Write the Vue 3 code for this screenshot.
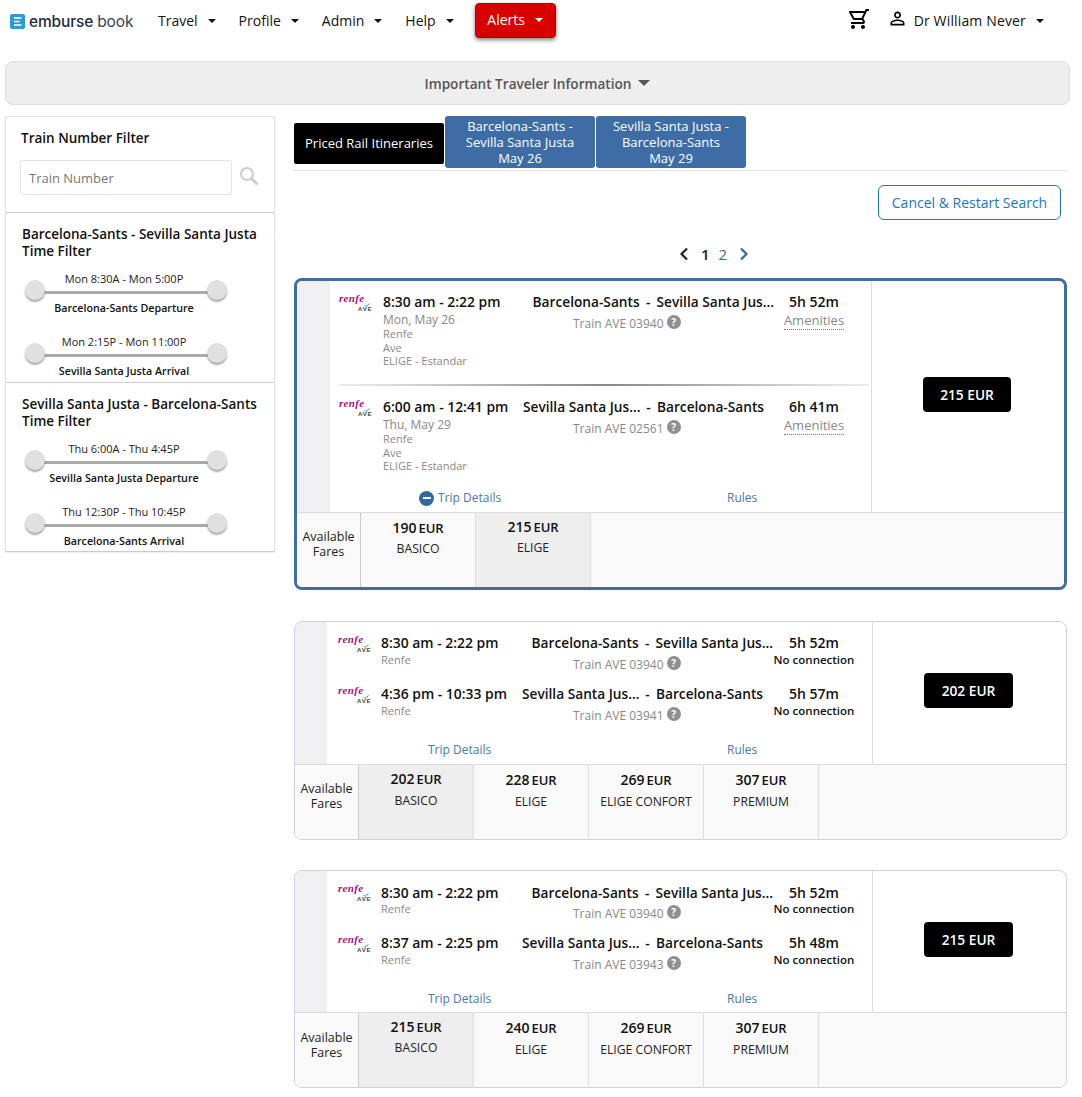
<script setup>
const nav = ['Travel', 'Profile', 'Admin', 'Help']
const filters = [
  { title: ['Barcelona-Sants - Sevilla Santa Justa', 'Time Filter'], sliders: [
    { range: 'Mon 8:30A - Mon 5:00P', cap: 'Barcelona-Sants Departure' },
    { range: 'Mon 2:15P - Mon 11:00P', cap: 'Sevilla Santa Justa Arrival' } ] },
  { title: ['Sevilla Santa Justa - Barcelona-Sants', 'Time Filter'], sliders: [
    { range: 'Thu 6:00A - Thu 4:45P', cap: 'Sevilla Santa Justa Departure' },
    { range: 'Thu 12:30P - Thu 10:45P', cap: 'Barcelona-Sants Arrival' } ] },
]
const out = { o: 'Barcelona-Sants', d: 'Sevilla Santa Jus...' }
const back = { o: 'Sevilla Santa Jus...', d: 'Barcelona-Sants' }
const cards = [
  { active: true, price: '215 EUR', legs: [
    { ...out, time: '8:30 am - 2:22 pm', date: 'Mon, May 26', train: 'Train AVE 03940', dur: '5h 52m' },
    { ...back, time: '6:00 am - 12:41 pm', date: 'Thu, May 29', train: 'Train AVE 02561', dur: '6h 41m' } ],
    fares: [ { v: '190', n: 'BASICO' }, { v: '215', n: 'ELIGE', sel: true } ] },
  { price: '202 EUR', legs: [
    { ...out, time: '8:30 am - 2:22 pm', train: 'Train AVE 03940', dur: '5h 52m' },
    { ...back, time: '4:36 pm - 10:33 pm', train: 'Train AVE 03941', dur: '5h 57m' } ],
    fares: [ { v: '202', n: 'BASICO', sel: true }, { v: '228', n: 'ELIGE' }, { v: '269', n: 'ELIGE CONFORT' }, { v: '307', n: 'PREMIUM' } ] },
  { short: true, price: '215 EUR', legs: [
    { ...out, time: '8:30 am - 2:22 pm', train: 'Train AVE 03940', dur: '5h 52m' },
    { ...back, time: '8:37 am - 2:25 pm', train: 'Train AVE 03943', dur: '5h 48m' } ],
    fares: [ { v: '215', n: 'BASICO', sel: true }, { v: '240', n: 'ELIGE' }, { v: '269', n: 'ELIGE CONFORT' }, { v: '307', n: 'PREMIUM' } ] },
]
</script>

<template>
  <div class="page">
    <header class="top">
      <div class="logo">
        <svg width="15" height="15" viewBox="0 0 15 15"><rect width="15" height="15" rx="2" fill="#2c9ad9" /><path d="M4 4h7.5M4 7.5h5.5M4 11h7.5" stroke="#fff" stroke-width="1.6" /></svg>
        <span class="logo-a">emburse</span><span class="logo-b">book</span>
      </div>
      <nav class="nav">
        <span v-for="n in nav" :key="n" class="nav-item">{{ n }}<i class="caret"></i></span>
      </nav>
      <button class="alerts">Alerts<i class="caret white"></i></button>
      <div class="top-right">
        <svg class="cart" width="24" height="24" viewBox="0 0 24 24"><path d="M15.55 13c.75 0 1.41-.41 1.75-1.03l3.58-6.49A.996.996 0 0 0 20.01 4H5.21l-.94-2H1v2h2l3.6 7.59-1.35 2.44C4.52 15.37 5.48 17 7 17h12v-2H7l1.1-2h7.45zM6.16 6h12.15l-2.76 5H8.53L6.16 6zM7 18c-1.1 0-1.99.9-1.99 2S5.9 22 7 22s2-.9 2-2-.9-2-2-2zm10 0c-1.1 0-1.99.9-1.99 2s.89 2 1.99 2 2-.9 2-2-.9-2-2-2z" /></svg>
        <svg class="person" width="21" height="21" viewBox="0 0 24 24"><path d="M12 5.9a2.1 2.1 0 1 1 0 4.2 2.1 2.1 0 0 1 0-4.2m0 9c2.97 0 6.1 1.46 6.1 2.1v1.1H5.9V17c0-.64 3.13-2.1 6.1-2.1M12 4C9.79 4 8 5.79 8 8s1.79 4 4 4 4-1.79 4-4-1.79-4-4-4zm0 9c-2.67 0-8 1.34-8 4v3h16v-3c0-2.66-5.33-4-8-4z" /></svg>
        <span class="nav-item user">Dr William Never<i class="caret"></i></span>
      </div>
    </header>

    <div class="info">Important Traveler Information<i class="info-caret"></i></div>

    <main class="main">
      <aside class="side">
        <section class="sec first">
          <h3>Train Number Filter</h3>
          <div class="search">
            <div class="input">Train Number</div>
            <svg width="20" height="20" viewBox="0 0 20 20"><circle cx="8" cy="8" r="6" fill="none" stroke="#ccc" stroke-width="2" /><path d="M12.5 12.5l6 6" stroke="#ccc" stroke-width="3" /></svg>
          </div>
        </section>
        <section v-for="(f, i) in filters" :key="i" class="sec filter" :class="'f' + i">
          <h3>{{ f.title[0] }}<br />{{ f.title[1] }}</h3>
          <div v-for="s in f.sliders" :key="s.cap" class="slider">
            <div class="range">{{ s.range }}</div>
            <div class="track"><b></b><b></b></div>
            <div class="cap">{{ s.cap }}</div>
          </div>
        </section>
      </aside>

      <div class="results">
        <div class="tabs">
          <div class="tab black">Priced Rail Itineraries</div>
          <div class="tab">Barcelona-Sants -<br />Sevilla Santa Justa<br />May 26</div>
          <div class="tab">Sevilla Santa Justa -<br />Barcelona-Sants<br />May 29</div>
        </div>
        <div class="actions"><button class="restart">Cancel &amp; Restart Search</button></div>
        <div class="pager">
          <svg width="10" height="14" viewBox="0 0 10 14"><path d="M8 1.5L2.5 7 8 12.5" fill="none" stroke="#222" stroke-width="2.2" /></svg>
          <span class="p1">1</span><span class="p2">2</span>
          <svg width="10" height="14" viewBox="0 0 10 14"><path d="M2 1.5L7.5 7 2 12.5" fill="none" stroke="#336a9e" stroke-width="2.2" /></svg>
        </div>

        <article v-for="(c, ci) in cards" :key="ci" class="card" :class="{ active: c.active, short: c.short }">
          <div class="upper">
            <div class="strip"></div>
            <div class="content">
              <template v-for="(l, li) in c.legs" :key="li">
                <div v-if="c.active && li === 1" class="rule"></div>
                <div class="leg">
                  <div class="brand">
                    <span class="renfe">renfe</span>
                    <svg class="tick" width="6" height="4" viewBox="0 0 6 4"><path d="M.5 2l1.5 1.5L5.5.5" fill="none" stroke="#3a8fc4" stroke-width="1" /></svg>
                    <span class="ave">AVE</span>
                  </div>
                  <div class="when">
                    <div class="time">{{ l.time }}</div>
                    <div v-if="l.date" class="date">{{ l.date }}</div>
                    <div class="small">Renfe</div>
                    <template v-if="c.active">
                      <div class="small">Ave</div>
                      <div class="small">ELIGE - Estandar</div>
                    </template>
                  </div>
                  <div class="route">
                    <div class="stops"><span class="o">{{ l.o }}</span><span class="sep">-</span><span class="d">{{ l.d }}</span></div>
                    <div class="train">{{ l.train }}<i class="help">?</i></div>
                  </div>
                  <div class="dur">
                    <div class="dur-v">{{ l.dur }}</div>
                    <div v-if="c.active" class="amen"><span>Amenities</span></div>
                    <div v-else class="noconn">No connection</div>
                  </div>
                </div>
              </template>
              <div class="links">
                <span class="details"><i v-if="c.active" class="minus"></i>Trip Details</span>
                <span class="rules">Rules</span>
              </div>
            </div>
            <div class="pricebox"><span class="price">{{ c.price }}</span></div>
          </div>
          <div class="lower">
            <div class="avail">Available<br />Fares</div>
            <div v-for="fare in c.fares" :key="fare.n" class="fare" :class="{ sel: fare.sel }">
              <div class="fv"><strong>{{ fare.v }}</strong><span>EUR</span></div>
              <div class="fn">{{ fare.n }}</div>
            </div>
          </div>
        </article>
      </div>
    </main>
  </div>
</template>

<style>
html, body { margin: 0; background: #fff; }
</style>

<style scoped>
.page { width: 1082px; font-family: "Open Sans", "Noto Sans", sans-serif; color: #111; font-size: 14px; }
i { font-style: normal; }
.top { height: 61px; display: flex; align-items: flex-start; }
.logo { display: flex; align-items: center; margin: 14px 0 0 10px; width: 148px; height: 15px; }
.logo-a { margin-left: 4px; font-family: Inter, sans-serif; font-weight: 500; font-size: 15.5px; letter-spacing: -.15px; color: #1d2b45; }
.logo-b { margin-left: 4px; font-family: Inter, sans-serif; font-weight: 400; font-size: 15.5px; letter-spacing: -.1px; color: #33425a; }
.nav { display: flex; margin-top: 11px; }
.nav-item { display: inline-flex; align-items: center; line-height: 20px; margin-right: 23px; }
.caret { display: inline-block; width: 0; height: 0; border: 4px solid transparent; border-top-color: #111; border-bottom: 0; margin-left: 10px; }
.caret.white { border-top-color: #fff; }
.alerts { display: flex; align-items: center; justify-content: center; margin: 3px 0 0 -2px; width: 81px; height: 35px; padding: 0 0 2px; background: #d90000; color: #fff; border: 1px solid #b30000; border-radius: 4px; box-shadow: 0 2px 4px rgba(0,0,0,.5); font: 14px "Open Sans", sans-serif; }
.top-right { margin-left: auto; display: flex; align-items: flex-start; margin-right: 38px; }
.cart { transform: scaleX(-1); margin-top: 7px; margin-right: 17px; }
.person { margin-top: 8px; margin-right: 6px; }
.user { margin: 11px 0 0; letter-spacing: .15px; }
.info { margin: 0 12px 0 5px; height: 42px; display: flex; align-items: center; justify-content: center; background: #eee; border: 1px solid #ddd; border-radius: 8px; color: #555; font-weight: 600; font-size: 13.6px; }
.info-caret { width: 0; height: 0; border: 6.5px solid transparent; border-top-color: #555; border-bottom: 0; margin-left: 7px; }
.main { display: flex; align-items: flex-start; margin-top: 11px; padding-left: 5px; }
.side { width: 270px; box-sizing: border-box; border: 1px solid #e4e4e4; border-bottom-color: #ccc; box-shadow: 0 1px 2px rgba(0,0,0,.08); }
.sec { padding: 0 15px; }
.sec h3 { margin: 0; font-size: 13.5px; line-height: 17px; font-weight: 600; color: #111; white-space: nowrap; padding-top: 1px; }
.first { height: 96px; padding-top: 12px; box-sizing: border-box; border-bottom: 1px solid #ccc; }
.search { display: flex; align-items: center; margin: 13px 0 0 -1px; }
.input { width: 212px; height: 35px; box-sizing: border-box; border: 1px solid #e3e3e3; border-radius: 3px; padding-left: 8px; line-height: 35px; font-size: 13px; color: #777; }
.search svg { margin-left: 7px; margin-top: -4px; }
.filter { padding: 12px 0 0 16px; height: 170px; box-sizing: border-box; }
.f0 { border-bottom: 1px solid #ccc; }
.f1 { height: 168px; }
.filter h3 { margin-bottom: 8px; }
.slider { width: 204px; margin-left: 2px; height: 63px; text-align: center; }
.range { font-size: 11px; line-height: 16px; padding: 3px 4px 0 0; color: #222; }
.track { position: relative; height: 3px; background: #aaa; margin: 4px 11px 0; }
.track b { position: absolute; top: -11px; width: 20px; height: 20px; border-radius: 50%; background: #e0e0e0; box-shadow: 0 2px 2px rgba(0,0,0,.35); }
.track b:first-child { left: -10px; }
.track b:last-child { right: -10px; }
.cap { font-size: 10.7px; font-weight: 600; line-height: 16px; margin-top: 6px; padding-right: 4px; color: #111; }
.results { width: 773px; margin-left: 19px; }
.tabs { display: flex; align-items: flex-start; border-bottom: 1px solid #e5e5e5; height: 54px; gap: 1px; }
.tab { width: 150px; height: 52px; box-sizing: border-box; background: #3d6da4; color: #fff; border-radius: 3px; text-align: center; font-size: 13px; line-height: 16px; padding-top: 2px; }
.tab.black { margin-top: 7px; height: 41px; background: #000; line-height: 41px; padding: 0; font-weight: 500; border-radius: 2px; }
.actions { display: flex; justify-content: flex-end; padding: 14px 6px 0 0; }
.restart { width: 183px; height: 35px; padding: 0; background: #fff; border: 1px solid #1c75c4; border-radius: 6px; color: #1c75c4; font: 14px "Open Sans", sans-serif; }
.pager { display: flex; align-items: center; height: 20px; margin: 24px 0 14px 0; padding-left: 385px; }
.p1 { margin-left: 12px; font-size: 15px; font-weight: 600; color: #222; }
.p2 { margin-left: 9px; margin-right: 12px; font-size: 15px; color: #336a9e; }
.card { border: 1px solid #cfd0e0; border-radius: 8px; overflow: hidden; background: #fff; margin-bottom: 30px; }
.card.active { border: 3px solid #3d6da4; margin-bottom: 31px; }
.upper { display: flex; height: 142px; border-bottom: 1px solid #ddd; }
.active .upper { height: 231px; }
.short .upper { height: 141px; }
.strip { width: 32px; background: #f0f0f2; flex: none; }
.active .strip { width: 33px; }
.content { width: 546px; flex: none; border-right: 1px solid #ddd; padding-left: 11px; box-sizing: border-box; position: relative; }
.active .content { width: 542px; padding-left: 9px; }
.leg { display: flex; height: 51px; padding-top: 11px; box-sizing: border-box; }
.short .leg:first-child .time,
.short .leg:first-child .stops,
.short .leg:first-child .dur-v { margin: 1px 0 -1px; }
.active .leg { height: 105px; }
.brand { width: 43px; flex: none; height: 18px; position: relative; margin-top: 1px; }
.active .brand { width: 44px; }
.renfe { position: absolute; left: 0; top: 0; font: italic 700 11px/11px "Liberation Serif", serif; color: #a3127a; letter-spacing: .3px; }
.tick { position: absolute; left: 25px; top: 10px; }
.ave { position: absolute; left: 19px; top: 13px; font: 700 6px/6px "Liberation Sans", sans-serif; color: #444; letter-spacing: .8px; }
.when { width: 140px; flex: none; }
.card:not(.active) .when { width: 141px; }
.time { font-size: 13.9px; font-weight: 600; line-height: 20px; white-space: nowrap; color: #111; }
.date { font-size: 12px; line-height: 15px; color: #888; margin-top: 0; }
.small { font-size: 11px; line-height: 13.5px; color: #888; }
.route { width: 251px; flex: none; }
.stops { display: flex; line-height: 20px; font-size: 13.7px; font-weight: 600; }
.o { width: 117px; text-align: right; white-space: nowrap; }
.sep { width: 17px; text-align: center; }
.d { white-space: nowrap; }
.train { display: flex; align-items: center; padding-left: 50px; font-size: 12px; color: #888; line-height: 16px; margin-top: 4px; }
.card:not(.active) .train { padding-left: 51px; }
.help { width: 14px; height: 14px; border-radius: 50%; background: #8f8f8f; color: #fff; font-size: 10px; font-weight: 700; line-height: 14px; text-align: center; margin: -5px 0 0 3px; }
.dur { width: 80px; flex: none; text-align: center; }
.card:not(.active) .dur { width: 82px; white-space: nowrap; }
.dur-v { font-size: 14px; font-weight: 600; line-height: 20px; }
.amen { font-size: 13px; color: #888; line-height: 18px; margin-top: -1px; }
.amen span { border-bottom: 1px dotted #777; }
.noconn { font-size: 11.5px; font-weight: 600; line-height: 14px; }
.rule { position: absolute; left: 9px; right: 2px; top: 103px; height: 2px; background: linear-gradient(90deg, #eee, #888 50%, #eee); }
.links { position: absolute; left: 0; right: 0; bottom: 5px; height: 18px; font-size: 12px; color: #4a78a8; line-height: 18px; }
.short .links { bottom: 4px; }
.details { position: absolute; left: 101px; display: inline-flex; align-items: center; }
.active .details { left: 89px; }
.rules { position: absolute; left: 400px; }
.active .rules { left: 397px; }
.minus { width: 15px; height: 15px; border-radius: 50%; background: #336a9e; position: relative; margin-right: 4px; }
.minus::after { content: ""; position: absolute; left: 3.5px; top: 6.5px; width: 8px; height: 2px; background: #fff; }
.pricebox { flex: 1; display: flex; align-items: center; justify-content: center; }
.price { width: 89px; height: 35px; line-height: 35px; background: #000; color: #fff; text-align: center; border-radius: 4px; font-size: 13.7px; font-weight: 600; margin: 0 2px 5px 0; }
.active .price { width: 88px; }
.lower { display: flex; background: #f9f9f9; height: 74px; }
.avail { width: 64px; flex: none; box-sizing: border-box; border-right: 1px solid #ccc; text-align: center; font-size: 12.5px; line-height: 15px; padding-top: 16px; color: #222; }
.short .avail { padding-top: 17px; }
.fare { width: 115px; flex: none; box-sizing: border-box; border-right: 1px solid #ddd; text-align: center; padding-top: 5px; }
.fare.sel { background: #eee; padding-top: 4px; border-top-left-radius: 3px; }
.fv { display: flex; justify-content: center; align-items: baseline; gap: 2px; line-height: 20px; font-weight: 600; }
.fv strong { font-size: 14px; font-weight: 600; }
.fv span { font-size: 13px; }
.fn { font-size: 12.2px; line-height: 16px; margin-top: 3px; color: #222; }
.card:not(.active):not(.short) .fn { margin-top: 4px; }
.short .fare:not(.sel) .fn { margin-top: 4px; }
</style>
